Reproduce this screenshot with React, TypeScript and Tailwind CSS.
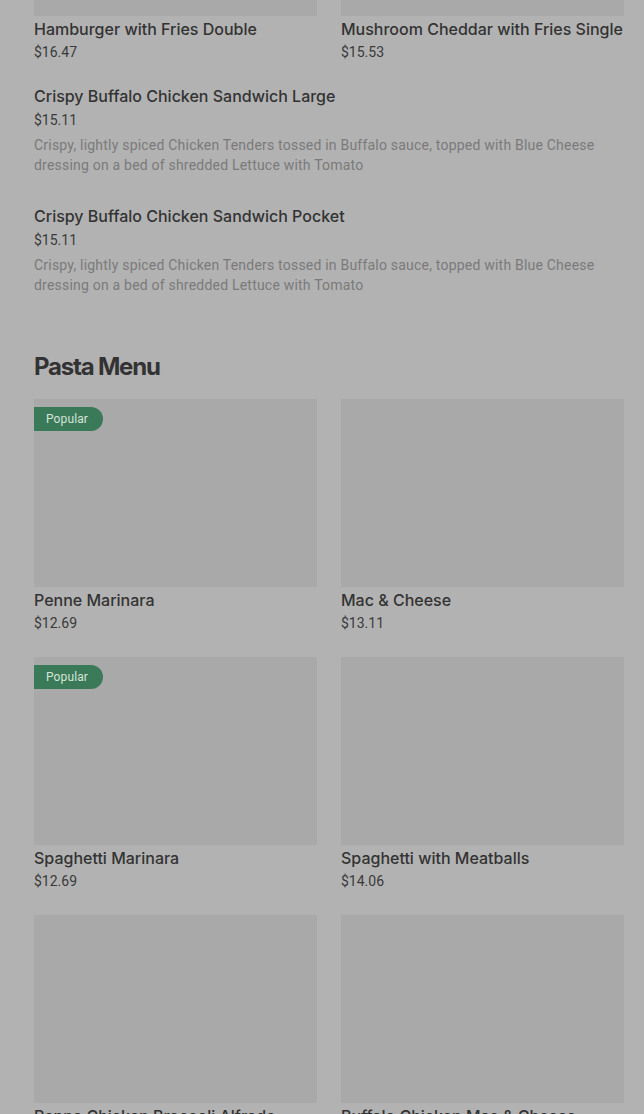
import React from 'react'

interface GridItem {
  name: string
  price: string
  popular?: boolean
}

interface ListItem {
  name: string
  price: string
  description: string
}

const topRow: GridItem[] = [
  { name: 'Hamburger with Fries Double', price: '$16.47' },
  { name: 'Mushroom Cheddar with Fries Single', price: '$15.53' },
]

const buffaloDesc =
  'Crispy, lightly spiced Chicken Tenders tossed in Buffalo sauce, topped with Blue Cheese dressing on a bed of shredded Lettuce with Tomato'

const listItems: ListItem[] = [
  { name: 'Crispy Buffalo Chicken Sandwich Large', price: '$15.11', description: buffaloDesc },
  { name: 'Crispy Buffalo Chicken Sandwich Pocket', price: '$15.11', description: buffaloDesc },
]

const pasta: GridItem[] = [
  { name: 'Penne Marinara', price: '$12.69', popular: true },
  { name: 'Mac & Cheese', price: '$13.11' },
  { name: 'Spaghetti Marinara', price: '$12.69', popular: true },
  { name: 'Spaghetti with Meatballs', price: '$14.06' },
  { name: 'Penne Chicken Broccoli Alfredo', price: '$15.47' },
  { name: 'Buffalo Chicken Mac & Cheese', price: '$15.47' },
]

const body = { fontFamily: 'Roboto, "Liberation Sans", sans-serif' }

const Card = ({ item }: { item: GridItem }) => (
  <div className="flex flex-col">
    <div className="relative h-[188px] bg-[#a9a9a9]">
      {item.popular && (
        <span
          className="absolute left-0 top-2 h-6 pl-3 pr-[15px] flex items-center rounded-r-full bg-[#3b7a58] text-[12px] tracking-[0.01em] text-[#d3e4d9]"
          style={body}
        >
          Popular
        </span>
      )}
    </div>
    <div className="mt-px text-[16px] leading-6 font-medium text-[#333333]">{item.name}</div>
    <div className="mt-px text-[14px] leading-5 text-[#3a3a3a]" style={body}>
      {item.price}
    </div>
  </div>
)

const App = () => {
  return (
    <div
      className="min-h-screen h-[1114px] overflow-hidden bg-[#b2b2b2] pl-[34px] pr-[20px]"
      style={{ fontFamily: 'Inter, "Noto Sans", sans-serif' }}
    >
      <div className="-mt-[172px] grid grid-cols-2 gap-x-6">
        {topRow.map((item) => (
          <Card key={item.name} item={item} />
        ))}
      </div>

      <div className="mt-[22px] flex flex-col gap-[29px]">
        {listItems.map((item) => (
          <div key={item.name} className="flex flex-col">
            <div className="text-[16px] leading-6 font-medium text-[#333333]">{item.name}</div>
            <div className="mt-0.5 text-[14px] leading-5 text-[#3a3a3a]" style={body}>
              {item.price}
            </div>
            <p className="mt-[5px] pr-6 text-[14px] leading-5 tracking-[0.015em] text-[#7a7a7a]" style={body}>
              {item.description}
            </p>
          </div>
        ))}
      </div>

      <h2 className="mt-14 text-[24px] leading-8 font-bold tracking-[-0.05em] text-[#333333]">Pasta Menu</h2>

      <div className="mt-4 grid grid-cols-2 gap-x-6 gap-y-6">
        {pasta.map((item) => (
          <Card key={item.name} item={item} />
        ))}
      </div>
    </div>
  )
}

export default App
